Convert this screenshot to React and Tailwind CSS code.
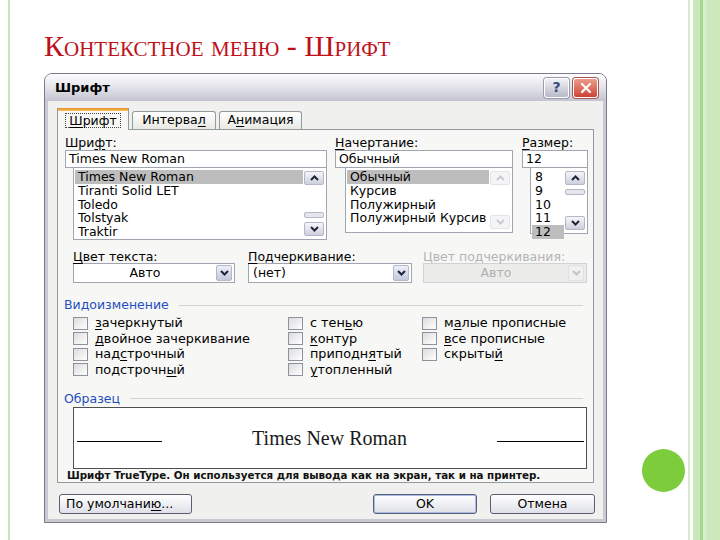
import React from "react";

const U = ({ children }) => <span className="underline underline-offset-[2px]">{children}</span>;

const Chevron = ({ up, color = "#20253a" }) => (
  <svg width="9" height="6" viewBox="0 0 9 6">
    <path d={up ? "M1 5l3.5-3.5L8 5" : "M1 1l3.5 3.5L8 1"} fill="none" stroke={color} strokeWidth="2" />
  </svg>
);

const ScrollBtn = ({ up, disabled }) => (
  <div
    className={
      "h-[14px] w-[20px] rounded-[2px] border flex items-center justify-center " +
      (disabled ? "border-[#e3e3e8] bg-[#f5f5f7]" : "border-[#b4b7c6] bg-gradient-to-b from-[#f6f6fa] to-[#cdd0dc]")
    }
  >
    <Chevron up={up} color={disabled ? "#cacace" : "#20253a"} />
  </div>
);

const ScrollBar = ({ thumb, disabled }) => (
  <div className="w-[23px] flex flex-col py-[3px] pr-[2px] pl-[1px]">
    <ScrollBtn up disabled={disabled} />
    <div className={"flex-1 flex flex-col " + (thumb === "top" ? "justify-start pt-[4px]" : "justify-end pb-[4px]")}>
      {thumb && <div className="h-[6px] w-[20px] rounded-[2px] border border-[#b4b7c6] bg-[#e6e7ee]" />}
    </div>
    <ScrollBtn disabled={disabled} />
  </div>
);

const ListItems = ({ items, selected }) => (
  <div className="flex-1 pt-[2px] pl-[1px]">
    {items.map((it) => (
      <div key={it} className={"leading-[13.75px] pl-[3px] whitespace-nowrap " + (it === selected ? "bg-[#bdbdbd]" : "")}>
        {it}
      </div>
    ))}
  </div>
);

const Select = ({ children, center, disabled }) => (
  <div
    className={
      "h-[20px] border flex items-center pr-[2px] " +
      (disabled ? "border-[#d2d2d6] bg-[#ececea] text-[#b0b0b0]" : "border-[#9fa6b0] bg-white")
    }
  >
    <div className={"flex-1 " + (center ? "text-center" : "pl-[4px]")}>{children}</div>
    <div
      className={
        "w-[16px] h-[16px] rounded-[2px] border flex items-center justify-center " +
        (disabled ? "border-[#e0e0e4] bg-[#f0f0f0]" : "border-[#b4b7c6] bg-gradient-to-b from-[#eef0f8] to-[#c3c8dc]")
      }
    >
      <Chevron color={disabled ? "#c4c4c8" : "#20253a"} />
    </div>
  </div>
);

const Check = ({ children }) => (
  <div className="h-[15.5px] flex items-center">
    <div className="w-[15px] h-[13px] border border-[#8d929c] bg-gradient-to-br from-[#dcdcde] to-white" />
    <span className="ml-[7px] leading-[14px] whitespace-nowrap">{children}</span>
  </div>
);

const Btn = ({ children, w, def }) => (
  <div
    className={
      "h-[20px] rounded-[3px] border border-[#5b5d74] bg-gradient-to-b from-white to-[#dfe0e8] flex items-center justify-center " +
      w +
      (def ? " shadow-[inset_0_0_0_1px_#a9bde6]" : "")
    }
  >
    {children}
  </div>
);

export default function App() {
  return (
    <div className="w-[720px] h-[540px] bg-white flex relative overflow-hidden">
      <div className="w-[8px]" />
      <div className="w-[2px] bg-[#c8e5b8]" />

      <div className="flex-1 pl-[34px] pt-[31px]">
        <h1 className="font-['Liberation_Serif',serif] text-[30px] leading-[30px] text-[#c0101a] [font-variant:small-caps] whitespace-nowrap">
          Контекстное меню - Шрифт
        </h1>

        <div className="w-[563px] h-[450px] mt-[12px] flex flex-col border border-[#7a7a88] rounded-t-[8px] overflow-hidden bg-[#f0f0ee] font-['DejaVu_Sans',sans-serif] text-[12.5px] text-black">
          {/* title bar */}
          <div className="h-[27px] flex items-center pl-[10px] pr-[8px] bg-gradient-to-b from-[#fdfdfe] via-[#e3e3ea] to-[#c4c4d0]">
            <span className="flex-1 font-bold text-[13px]">Шрифт</span>
            <div className="w-[25px] h-[20px] rounded-[3px] border border-white bg-gradient-to-b from-[#f1f1f6] to-[#b7b9ca] shadow-[0_0_0_1px_#9a9cad] flex items-center justify-center text-[#3b4a7a] font-bold text-[14px]">
              ?
            </div>
            <div className="ml-[4px] w-[25px] h-[20px] rounded-[3px] border border-white bg-gradient-to-b from-[#eb9c8c] to-[#cc4134] shadow-[0_0_0_1px_#a4574f] flex items-center justify-center">
              <svg width="12" height="12" viewBox="0 0 12 12">
                <path d="M2 2l8 8M10 2l-8 8" stroke="white" strokeWidth="2.2" strokeLinecap="round" />
              </svg>
            </div>
          </div>

          {/* body */}
          <div className="flex-1 flex flex-col border-x-[3px] border-b-[3px] border-[#c9c9d3]">
            {/* tabs */}
            <div className="flex items-end h-[22px] mt-[7px] pl-[9px] -mb-px relative z-10">
              <div className="w-[72px] h-[22px] bg-[#f7f7f5] border-x border-[#919b9c] flex flex-col">
                <div className="h-[3px] bg-gradient-to-b from-[#e2892a] to-[#fbc85a]" />
                <div className="flex-1 flex items-center justify-center">
                  <span className="border border-dotted border-[#444] px-[3px] leading-[13px]">
                    <U>Ш</U>рифт
                  </span>
                </div>
              </div>
              <div className="ml-[3px] w-[84px] h-[18px] mb-[1px] rounded-t-[3px] border border-b-0 border-[#919b9c] bg-gradient-to-b from-white to-[#e9e9e4] flex items-center justify-center">
                Интерва<U>л</U>
              </div>
              <div className="ml-[3px] w-[83px] h-[18px] mb-[1px] rounded-t-[3px] border border-b-0 border-[#919b9c] bg-gradient-to-b from-white to-[#e9e9e4] flex items-center justify-center">
                А<U>н</U>имация
              </div>
            </div>

            {/* panel */}
            <div className="ml-[9px] w-[537px] h-[354px] border border-[#919b9c] bg-[#f7f7f5] flex flex-col">
              <div className="flex pt-[6px] pl-[7px]">
                <div className="w-[262px] flex flex-col">
                  <div className="h-[14px] leading-[14px]">
                    Шри<U>ф</U>т:
                  </div>
                  <div className="h-[18px] border border-[#9fa6b0] bg-white pl-[3px] leading-[16px]">Times New Roman</div>
                  <div className="ml-[8px] h-[72px] flex border border-t-0 border-[#9fa6b0] bg-white">
                    <ListItems
                      items={["Times New Roman", "Tiranti Solid LET", "Toledo", "Tolstyak", "Traktir"]}
                      selected="Times New Roman"
                    />
                    <ScrollBar thumb="bottom" />
                  </div>
                </div>
                <div className="ml-[8px] w-[178px] flex flex-col">
                  <div className="h-[14px] leading-[14px]">
                    <U>Н</U>ачертание:
                  </div>
                  <div className="h-[18px] border border-[#9fa6b0] bg-white pl-[3px] leading-[16px]">Обычный</div>
                  <div className="ml-[10px] h-[65px] flex border border-t-0 border-[#9fa6b0] bg-white">
                    <ListItems items={["Обычный", "Курсив", "Полужирный", "Полужирный Курсив"]} selected="Обычный" />
                    <ScrollBar disabled />
                  </div>
                </div>
                <div className="ml-[9px] w-[66px] flex flex-col">
                  <div className="h-[14px] leading-[14px]">
                    <U>Р</U>азмер:
                  </div>
                  <div className="h-[18px] border border-[#9fa6b0] bg-white pl-[3px] leading-[16px]">12</div>
                  <div className="ml-[8px] h-[66px] flex border border-t-0 border-[#9fa6b0] bg-white">
                    <ListItems items={["8", "9", "10", "11", "12"]} selected="12" />
                    <ScrollBar thumb="top" />
                  </div>
                </div>
              </div>

              <div className="flex mt-[10px] pl-[15px]">
                <div className="w-[162px]">
                  <div className="h-[13px] leading-[13px]">
                    <U>Ц</U>вет текста:
                  </div>
                  <Select center>Авто</Select>
                </div>
                <div className="ml-[13px] w-[164px]">
                  <div className="h-[13px] leading-[13px]">
                    <U>П</U>одчеркивание:
                  </div>
                  <Select>(нет)</Select>
                </div>
                <div className="ml-[11px] w-[164px]">
                  <div className="h-[13px] leading-[13px] text-[#b4b4b4]">Цвет подчеркивания:</div>
                  <Select center disabled>
                    Авто
                  </Select>
                </div>
              </div>

              <div className="flex items-center mt-[15px] pl-[6px] pr-[10px] h-[14px]">
                <span className="text-[#1f4fc0] leading-[14px]">Видоизменение</span>
                <div className="flex-1 h-px bg-[#d3d3cc] ml-[10px]" />
              </div>

              <div className="flex mt-[3.5px] pl-[15px] text-[12.8px]">
                <div className="w-[215px] flex flex-col">
                  <Check>
                    <U>з</U>ачеркнутый
                  </Check>
                  <Check>
                    <U>д</U>войное зачеркивание
                  </Check>
                  <Check>
                    над<U>с</U>трочный
                  </Check>
                  <Check>
                    подстрочн<U>ы</U>й
                  </Check>
                </div>
                <div className="w-[134px] flex flex-col">
                  <Check>
                    с тен<U>ь</U>ю
                  </Check>
                  <Check>
                    <U>к</U>онтур
                  </Check>
                  <Check>
                    приподн<U>я</U>тый
                  </Check>
                  <Check>
                    <U>у</U>топленный
                  </Check>
                </div>
                <div className="flex flex-col">
                  <Check>
                    м<U>а</U>лые прописные
                  </Check>
                  <Check>
                    <U>в</U>се прописные
                  </Check>
                  <Check>
                    скрыты<U>й</U>
                  </Check>
                </div>
              </div>

              <div className="flex items-center mt-[14px] pl-[6px] pr-[10px] h-[14px]">
                <span className="text-[#1f4fc0] leading-[14px]">Образец</span>
                <div className="flex-1 h-px bg-[#d3d3cc] ml-[10px]" />
              </div>

              <div className="ml-[15px] mt-[1.5px] w-[514px] h-[62px] border border-[#505050] bg-white flex items-center">
                <div className="ml-[3px] w-[85px] h-px bg-black mt-[8px]" />
                <div className="flex-1" />
                <span className="font-['Liberation_Serif',serif] text-[20px] leading-[22px] text-[#1a1a1a]">Times New Roman</span>
                <div className="flex-1" />
                <div className="mr-[2px] w-[87px] h-px bg-black mt-[8px]" />
              </div>

              <div className="ml-[9px] text-[10.3px] font-bold leading-[13px] mt-[0.5px] whitespace-nowrap text-[#111]">
                Шрифт TrueType. Он используется для вывода как на экран, так и на принтер.
              </div>
            </div>

            {/* buttons */}
            <div className="flex mt-[11px] pl-[11px] pr-[8px]">
              <Btn w="w-[133px]">
                <span className="w-full pl-[6px] text-left">
                  По умолчани<U>ю</U>...
                </span>
              </Btn>
              <div className="flex-1" />
              <Btn w="w-[104px]" def>
                OK
              </Btn>
              <div className="w-[13px]" />
              <Btn w="w-[105px]">Отмена</Btn>
            </div>
          </div>
        </div>
      </div>

      {/* right stripes */}
      <div className="w-[2px] bg-[#d3ebc6]" />
      <div className="w-[3px] bg-white" />
      <div className="w-[7px] bg-[#cbe7bc]" />
      <div className="w-[3px] bg-[#a6d98c]" />
      <div className="w-[4px] bg-[#d6eecb]" />
      <div className="w-[13px] bg-[#cce9be]" />

      <div className="absolute left-[642px] top-[449px] w-[43px] h-[43px] rounded-full bg-[#7ccc3c]" />
    </div>
  );
}
